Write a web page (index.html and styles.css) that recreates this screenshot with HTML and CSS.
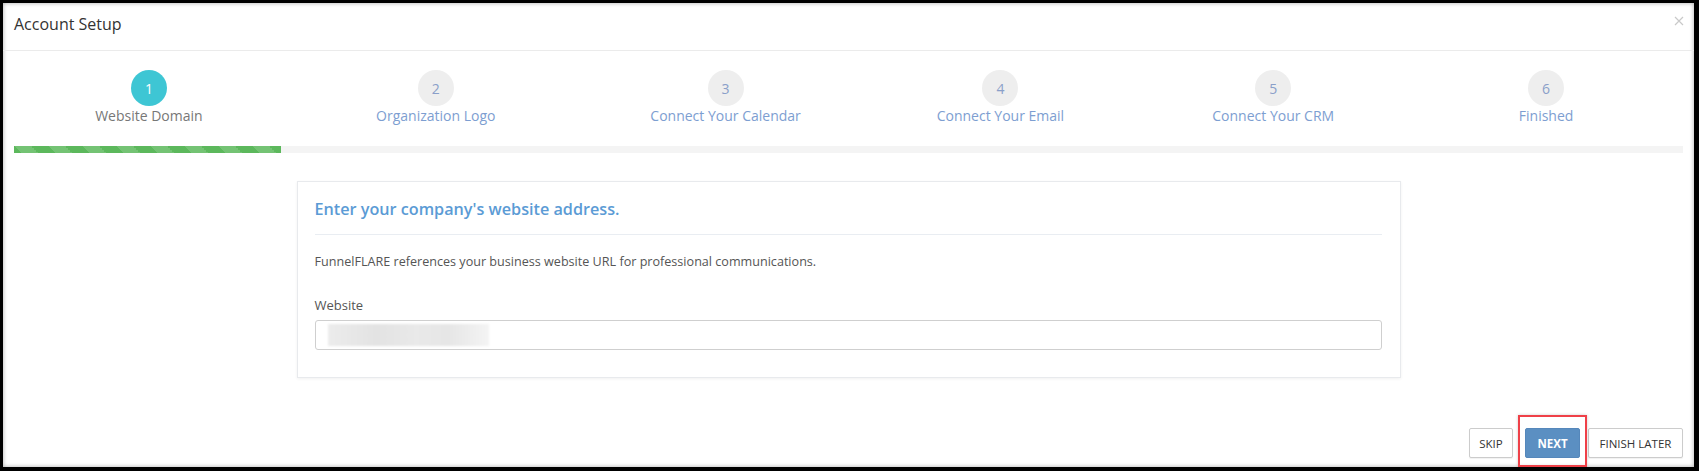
FILE: index.html
```html
<!DOCTYPE html>
<html lang="en">
<head>
    <meta charset="UTF-8">
    <meta name="viewport" content="width=device-width, initial-scale=1.0">
    <title>Account Setup</title>
    <link rel="stylesheet" href="styles.css">
</head>
<body>
    <div class="modal">
        <div class="modal-header">
            <h4 class="modal-title">Account Setup</h4>
            <span class="close">
                <svg width="10" height="10" viewBox="0 0 10 10"><path d="M1 1L9 9M9 1L1 9" stroke="#c9c9c9" stroke-width="1.2" fill="none"/></svg>
            </span>
        </div>

        <div class="modal-body">
            <!-- wizard steps -->
            <div class="steps">
                <div class="step active">
                    <span class="step-num">1</span>
                    <span class="step-label">Website Domain</span>
                </div>
                <div class="step">
                    <span class="step-num">2</span>
                    <span class="step-label">Organization Logo</span>
                </div>
                <div class="step">
                    <span class="step-num">3</span>
                    <span class="step-label">Connect Your Calendar</span>
                </div>
                <div class="step">
                    <span class="step-num">4</span>
                    <span class="step-label">Connect Your Email</span>
                </div>
                <div class="step">
                    <span class="step-num">5</span>
                    <span class="step-label">Connect Your CRM</span>
                </div>
                <div class="step">
                    <span class="step-num">6</span>
                    <span class="step-label">Finished</span>
                </div>
            </div>

            <div class="progress">
                <div class="progress-bar" style="width: 16%"></div>
            </div>

            <!-- step content -->
            <div class="panel">
                <h3 class="panel-title">Enter your company's website address.</h3>
                <p class="panel-text">FunnelFLARE references your business website URL for professional communications.</p>
                <label class="form-label">Website</label>
                <div class="form-control">
                    <span class="blurred"></span>
                </div>
            </div>
        </div>

        <div class="modal-footer">
            <button class="btn btn-default btn-skip">SKIP</button>
            <span class="highlight">
                <button class="btn btn-primary">NEXT</button>
            </span>
            <button class="btn btn-default btn-later">FINISH LATER</button>
        </div>
    </div>
</body>
</html>
```

FILE: styles.css
```css
html, body {
    height: 100%;
}
body {
    margin: 0;
    padding: 3px 5px 4px 3px;
    box-sizing: border-box;
    background-color: #000;
    font-family: 'Open Sans', 'Noto Sans', sans-serif;
    color: #333;
    display: flex;
    flex-direction: column;
}
.modal {
    flex: 1;
    background-color: #fff;
    box-shadow: inset 0 0 4px rgba(0, 0, 0, 0.35);
    display: flex;
    flex-direction: column;
}

/* header */
.modal-header {
    display: flex;
    justify-content: space-between;
    padding: 10px 10px 15px 11px;
    border-bottom: 1px solid #ebebeb;
}
.modal-title {
    margin: 0;
    font-size: 16px;
    line-height: 22px;
    font-weight: normal;
    color: #333;
}
.close {
    display: flex;
    margin-top: 3px;
    height: 10px;
}

.modal-body {
    padding: 19px 11px 0 11px;
}

/* wizard steps */
.steps {
    display: grid;
    grid-template-columns: 270fr 304fr 276fr 274fr 272fr 274fr;
}
.step {
    display: flex;
    flex-direction: column;
    align-items: center;
}
.step-num {
    width: 36px;
    height: 36px;
    border-radius: 50%;
    background-color: #eee;
    color: #8a9fc9;
    font-size: 14px;
    display: flex;
    align-items: center;
    justify-content: center;
}
.step-label {
    font-size: 14px;
    line-height: 20px;
    color: #7d9ed1;
}
.step.active .step-num {
    background-color: #3ec6d4;
    color: #fff;
}
.step.active .step-label {
    color: #777;
}

/* progress */
.progress {
    margin-top: 20px;
    height: 7px;
    background-color: #f4f4f4;
}
.progress-bar {
    height: 100%;
    background-color: #5cb85c;
    background-image: linear-gradient(45deg, rgba(255, 255, 255, 0.15) 25%, transparent 25%, transparent 50%, rgba(255, 255, 255, 0.15) 50%, rgba(255, 255, 255, 0.15) 75%, transparent 75%, transparent);
    background-size: 34px 34px;
}

/* panel */
.panel {
    width: 1104px;
    box-sizing: border-box;
    margin: 28px auto 0;
    padding: 16px 18px 27px 17px;
    border: 1px solid #e8eaed;
    box-shadow: 0 1px 3px rgba(0, 0, 0, 0.06);
}
.panel-title {
    margin: 0;
    padding-bottom: 14px;
    border-bottom: 1px solid #e9edf2;
    font-size: 16.2px;
    line-height: 22px;
    font-weight: 600;
    color: #5b9bd5;
}
.panel-text {
    margin: 18px 0 0;
    font-size: 12.6px;
    line-height: 17px;
    color: #555;
}
.form-label {
    display: block;
    margin-top: 27px;
    font-size: 13px;
    line-height: 17px;
    color: #555;
}
.form-control {
    margin-top: 6px;
    height: 30px;
    box-sizing: border-box;
    border: 1px solid #cfcfcf;
    border-radius: 3px;
    padding: 3px 12px;
}
.blurred {
    display: block;
    width: 161px;
    height: 22px;
    background: linear-gradient(to right, #ececec, #e3e3e3 30%, #e9e9e9 55%, #e6e6e6 75%, #f4f4f4);
    filter: blur(1px);
}

/* footer */
.modal-footer {
    margin-top: auto;
    padding: 0 11px 9px;
    display: flex;
    justify-content: flex-end;
    align-items: flex-start;
}
.btn {
    height: 30px;
    padding: 0 12px;
    border: 1px solid #ccc;
    border-radius: 2px;
    font-family: 'Open Sans', 'Noto Sans', sans-serif;
    font-size: 11.5px;
    cursor: pointer;
}
.btn-default {
    background-color: #fff;
    color: #333;
    box-shadow: 0 1px 1px rgba(0, 0, 0, 0.06);
}
.btn-primary {
    width: 55px;
    padding: 0;
    background-color: #5b8fc2;
    border-color: #5587bb;
    color: #fff;
    font-weight: bold;
}
.btn-skip {
    width: 44px;
    padding: 0;
}
.btn-later {
    width: 95px;
    padding: 0;
    margin-left: 8px;
}
.highlight {
    position: relative;
    display: flex;
    margin-left: 12px;
}
.highlight::after {
    content: '';
    position: absolute;
    top: -13px;
    bottom: -9px;
    left: -7px;
    right: -7px;
    border: 2px solid #ef4048;
    box-shadow: 0 0 3px rgba(0, 0, 0, 0.2);
}
```
